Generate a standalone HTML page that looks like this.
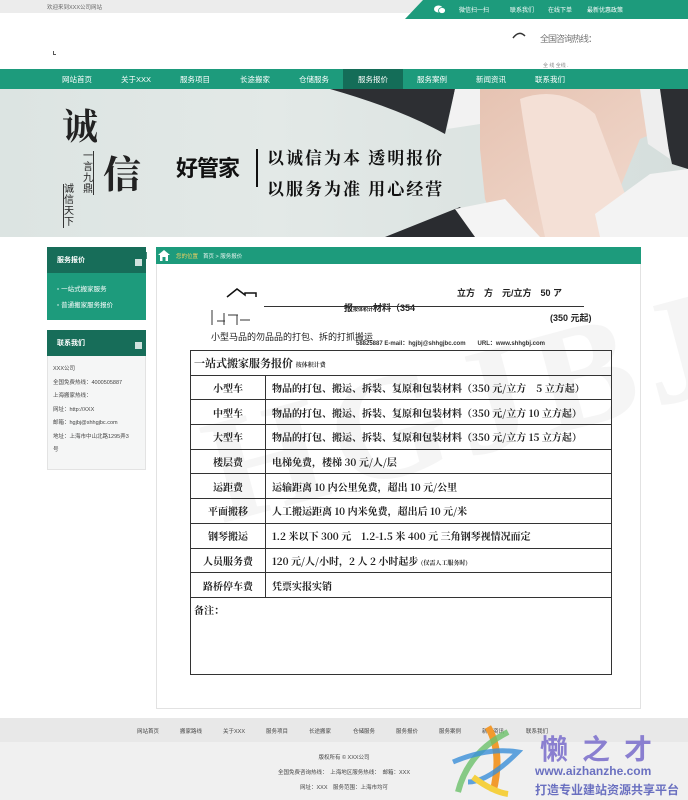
<!DOCTYPE html>
<html><head><meta charset="utf-8">
<style>
*{margin:0;padding:0;box-sizing:border-box}
body{width:688px;height:800px;overflow:hidden;background:#fff;font-family:"Liberation Sans","Noto Sans CJK SC",sans-serif;color:#333;position:relative}
.abs{position:absolute}
.top{left:0;top:0;width:688px;height:13px;background:#ececec}
.tgreen{left:405px;top:0;width:283px;height:19px;background:#1d9b7c;clip-path:polygon(18px 0,100% 0,100% 100%,0 100%)}
.tgreen span{position:absolute;top:5px;font-size:6px;color:#fff}
.nav{left:0;top:69px;width:688px;height:20px;background:#1d9b7c}
.nav span{position:absolute;top:5px;font-size:7.5px;color:#fff}
.act{left:343px;top:69px;width:60px;height:20px;background:#146d58}
.banner{left:0;top:89px;width:688px;height:148px;background:linear-gradient(90deg,#dce4e2,#e3e9e7 40%,#d5dedc);overflow:hidden}
.side-t{width:99px;height:26px;background:#176d59;color:#fff;font-size:7px;font-weight:bold;padding:8px 0 0 10px}
.sq{position:absolute;background:#fff;opacity:.8}
.list{left:47px;top:273px;width:99px;height:47px;background:#1d9b7c}
.list div{font-size:6.5px;color:#fff;margin:10px 0 0 10px;height:0}
.contact{left:47px;top:356px;width:99px;height:114px;background:#f5f6f6;border:1px solid #e3e3e3;border-top:none;padding:7px 0 0 5px}
.contact p{font-size:5.5px;color:#444;line-height:13.5px}
.panel{left:156px;top:247px;width:485px;height:462px;border:1px solid #e2e2e2}
.ph{left:156px;top:247px;width:485px;height:17px;background:#1d9b7c}
table{position:absolute;left:190px;top:350px;width:422px;border-collapse:collapse;font-family:"Noto Serif CJK SC","Liberation Serif",serif;font-weight:bold}
td{border:1.3px solid #333;height:24.7px;font-size:10px;color:#222;padding:0 6px;white-space:nowrap}
td.c{text-align:center;width:75px}
.foot1{left:0;top:718px;width:688px;height:24px;background:#e8e8e8}
.foot1 span{position:absolute;top:9px;font-size:5.5px;color:#444}
.foot2{left:0;top:742px;width:688px;height:58px;background:#f0f0f0}
.ft{font-size:5.5px;color:#444;text-align:center;position:absolute;width:688px;left:0}
</style></head><body>
<div class="abs top"></div>
<div class="abs" style="left:47px;top:3px;font-size:5.5px;color:#666">欢迎来到XXX公司网站</div>
<div class="abs tgreen">
<svg style="position:absolute;left:29px;top:5px" width="12" height="9"><ellipse cx="4.5" cy="4" rx="4.5" ry="3.5" fill="#fff"/><ellipse cx="8" cy="5.5" rx="3.5" ry="3" fill="#fff" stroke="#1d9b7c" stroke-width=".8"/></svg>
<span style="left:54px">微信扫一扫</span><span style="left:105px">联系我们</span><span style="left:143px">在线下单</span><span style="left:182px">最新优惠政策</span></div>
<svg class="abs" style="left:512px;top:30px" width="14" height="10"><path d="M1 8 Q7 0 13 6" stroke="#333" stroke-width="1.5" fill="none"/></svg>
<div class="abs" style="left:540px;top:32px;font-size:9px;color:#777;letter-spacing:-1px">全国咨询热线：</div>
<div class="abs" style="left:543px;top:62px;font-size:5px;color:#888">全 线 全线 .</div>
<div class="abs" style="left:53px;top:51px;width:3px;height:4px;border-left:1px solid #555;border-bottom:1px solid #555"></div>
<div class="abs nav"></div><div class="abs act"></div>
<div class="abs nav" style="background:none">
<span style="left:62px">网站首页</span><span style="left:121px">关于XXX</span><span style="left:180px">服务项目</span><span style="left:240px">长途搬家</span><span style="left:299px">仓储服务</span><span style="left:358px">服务报价</span><span style="left:417px">服务案例</span><span style="left:476px">新闻资讯</span><span style="left:535px">联系我们</span></div>
<div class="abs banner">
<svg width="688" height="148" style="position:absolute;left:0;top:0">
<defs><linearGradient id="sk" x1="0" y1="0" x2="1" y2="1"><stop offset="0" stop-color="#e6c3b2"/><stop offset="1" stop-color="#f3ddd2"/></linearGradient></defs>
<path d="M330 0 L455 0 L445 45 Q400 20 330 0Z" fill="#2d2f33"/>
<path d="M455 0 L490 0 L480 35 L447 40Z" fill="#f2f2f2"/>
<path d="M480 0 L688 0 L688 30 L640 50 L600 148 L500 148 L485 110 L480 60Z" fill="url(#sk)"/>
<path d="M520 10 Q560 -5 595 25 L625 105 L600 148 L545 148 Q530 80 520 10Z" fill="#f4e0d6"/>
<path d="M385 148 L460 118 L480 148Z" fill="#2a2c30"/>
<path d="M455 120 L505 110 L540 148 L475 148Z" fill="#f4f4f4"/>
<path d="M595 125 L650 85 L688 80 L688 148 L600 148Z" fill="#f3f3f3"/>
<path d="M655 0 L688 0 L688 80 L672 75Z" fill="#2c2e32"/>
<path d="M640 0 L660 0 L670 70 L648 55Z" fill="#eeeeee"/>
</svg>
<div class="abs" style="left:62px;top:10px;font-size:36px;color:#222;font-family:'Noto Serif CJK SC',serif;font-weight:bold">诚</div>
<div class="abs" style="left:103px;top:55px;font-size:38px;color:#222;font-family:'Noto Serif CJK SC',serif;font-weight:bold">信</div>
<div class="abs" style="left:83px;top:62px;font-size:10px;color:#222;width:11px;line-height:11px;border-right:1px solid #333">一言九鼎</div>
<div class="abs" style="left:63px;top:95px;font-size:10px;color:#222;width:11px;line-height:11px;border-left:1px solid #333">诚信天下</div>
<div class="abs" style="left:176px;top:62px;font-size:22px;font-weight:bold;color:#111;letter-spacing:-1px">好管家</div>
<div class="abs" style="left:256px;top:60px;width:2px;height:38px;background:#111"></div>
<div class="abs" style="left:267px;top:55px;font-size:17px;color:#111;font-family:'Noto Serif CJK SC',serif;font-weight:bold;letter-spacing:2px">以诚信为本 透明报价</div>
<div class="abs" style="left:267px;top:86px;font-size:17px;color:#111;font-family:'Noto Serif CJK SC',serif;font-weight:bold;letter-spacing:2px">以服务为准 用心经营</div>
</div>
<!-- sidebar -->
<div class="abs" style="left:47px;top:247px"><div class="side-t">服务报价</div>
<div class="sq" style="left:88px;top:12px;width:7px;height:7px"></div><div class="sq" style="left:95px;top:5px;width:5px;height:7px;background:#176d59"></div></div>
<div class="abs list"><div>▫ 一站式搬家服务</div><div style="margin-top:16px">▫ 普通搬家服务报价</div></div>
<div class="abs" style="left:47px;top:330px"><div class="side-t">联系我们</div>
<div class="sq" style="left:88px;top:12px;width:7px;height:7px"></div></div>
<div class="abs contact"><p>XXX公司</p><p>全国免费热线：4000505887</p><p>上海搬家热线：</p><p>网址：http://XXX</p><p>邮箱：hgjbj@shhgjbc.com</p><p>地址：上海市中山北路1295弄3</p><p>号</p></div>
<!-- main -->
<div class="abs panel"></div>
<div class="abs ph"></div>
<svg class="abs" style="left:158px;top:250px" width="12" height="11"><path d="M6 0 L12 5 L10 5 L10 11 L7.5 11 L7.5 7 L4.5 7 L4.5 11 L2 11 L2 5 L0 5Z" fill="#fff"/></svg>
<div class="abs" style="left:176px;top:252px;font-size:5.5px;color:#f0d060">您的位置</div>
<div class="abs" style="left:203px;top:252px;font-size:5.5px;color:#e8f5f0">首页 &gt; 服务报价</div>
<div class="abs" style="left:200px;top:320px;font-size:150px;color:#000;opacity:.035;font-weight:bold;font-family:'Liberation Serif',serif;transform:rotate(-15deg);letter-spacing:10px">HGJBJ</div>
<svg class="abs" style="left:210px;top:285px" width="70" height="40"><path d="M17 12 L27 4 L35 10 L35 8 L46 8 L46 12" stroke="#111" stroke-width="1.5" fill="none"/><path d="M2 25 L2 40 M7 36 L15 36 M14 28 L14 40 M18 30 L28 30 M27 30 L27 40 M30 35 L40 35" stroke="#333" fill="none"/></svg>
<div class="abs" style="left:344px;top:301px;font-size:9px;color:#222;font-weight:bold">报<span style="font-size:5px">按体积计</span>材料（354</div>
<div class="abs" style="left:457px;top:286px;font-size:9px;color:#222;font-weight:bold">立方　方　元/立方　5̈0 ア</div>
<div class="abs" style="left:550px;top:311px;font-size:9px;color:#222;font-weight:bold">(350 元起)</div>
<div class="abs" style="left:264px;top:306px;width:320px;height:1px;background:#333"></div>
<div class="abs" style="left:211px;top:330px;font-size:9px;color:#222">小型马品的勿品品的打包、拆的打抓搬运</div>
<div class="abs" style="left:356px;top:338px;font-size:6px;color:#333;font-weight:bold">58825887 E-mail：hgjbj@shhgjbc.com　　URL：www.shhgbj.com</div>
<table>
<tr><td colspan="2" style="font-size:11px;padding-left:3px">一站式搬家服务报价 <span style="font-size:6px">按体积计费</span></td></tr>
<tr><td class="c">小型车</td><td>物品的打包、搬运、拆装、复原和包装材料（350 元/立方　5 立方起）</td></tr>
<tr><td class="c">中型车</td><td>物品的打包、搬运、拆装、复原和包装材料（350 元/立方 10 立方起）</td></tr>
<tr><td class="c">大型车</td><td>物品的打包、搬运、拆装、复原和包装材料（350 元/立方 15 立方起）</td></tr>
<tr><td class="c">楼层费</td><td>电梯免费，楼梯 30 元/人/层</td></tr>
<tr><td class="c">运距费</td><td>运输距离 10 内公里免费，超出 10 元/公里</td></tr>
<tr><td class="c">平面搬移</td><td>人工搬运距离 10 内米免费，超出后 10 元/米</td></tr>
<tr><td class="c">钢琴搬运</td><td>1.2 米以下 300 元　1.2-1.5 米 400 元 三角钢琴视情况而定</td></tr>
<tr><td class="c">人员服务费</td><td>120 元/人/小时，2 人 2 小时起步 <span style="font-size:6px">(仅需人工服务时)</span></td></tr>
<tr><td class="c">路桥停车费</td><td>凭票实报实销</td></tr>
<tr><td colspan="2" style="height:77px;vertical-align:top;padding:4px 3px">备注：</td></tr>
</table>
<!-- footer -->
<div class="abs foot1">
<span style="left:137px">网站首页</span><span style="left:180px">搬家路线</span><span style="left:223px">关于XXX</span><span style="left:266px">服务项目</span><span style="left:309px">长途搬家</span><span style="left:353px">仓储服务</span><span style="left:396px">服务报价</span><span style="left:439px">服务案例</span><span style="left:482px">新闻资讯</span><span style="left:526px">联系我们</span></div>
<div class="abs foot2"></div>
<div class="ft" style="top:753px">版权所有 © XXX公司</div>
<div class="ft" style="top:768px">全国免费咨询热线：　上海地区服务热线：　邮箱：XXX</div>
<div class="ft" style="top:783px">网址：XXX　服务范围：上海市均可</div>
<svg class="abs" style="left:448px;top:722px" width="75" height="78"><path d="M40 5 Q55 30 45 70" stroke="#f29a2e" stroke-width="7" fill="none"/><path d="M10 70 Q20 30 60 10" stroke="#6cc06a" stroke-width="6" fill="none" opacity=".8"/><path d="M5 40 Q40 25 70 30 Q40 60 20 60" stroke="#3a8fd8" stroke-width="5" fill="none" opacity=".8"/><path d="M25 55 Q45 70 60 72" stroke="#f5d040" stroke-width="6" fill="none"/></svg>
<div class="abs" style="left:540px;top:728px;font-size:28px;color:#8a7fd0;font-weight:bold;letter-spacing:14px;font-family:'Noto Sans CJK SC',sans-serif">懒之才</div>
<div class="abs" style="left:535px;top:764px;font-size:12px;color:#6a70c0;font-weight:bold">www.aizhanzhe.com</div>
<div class="abs" style="left:535px;top:781px;font-size:12px;color:#6a70c0;font-weight:bold;font-family:'Noto Sans CJK SC',sans-serif">打造专业建站资源共享平台</div>
</body></html>
